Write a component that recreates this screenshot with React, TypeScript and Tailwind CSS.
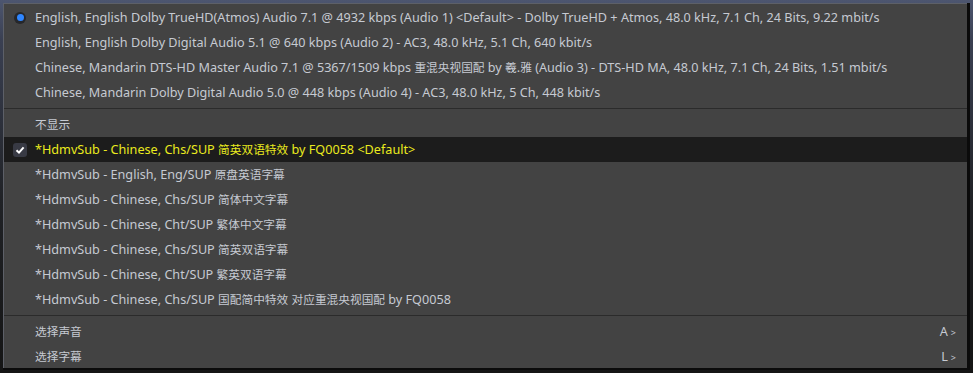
import React from 'react';

type Row = { text: string; mark?: 'radio' | 'check'; active?: boolean; key?: string };

const audio: Row[] = [
  { text: 'English, English Dolby TrueHD(Atmos) Audio 7.1 @ 4932 kbps (Audio 1) <Default> - Dolby TrueHD + Atmos, 48.0 kHz, 7.1 Ch, 24 Bits, 9.22 mbit/s', mark: 'radio' },
  { text: 'English, English Dolby Digital Audio 5.1 @ 640 kbps (Audio 2) - AC3, 48.0 kHz, 5.1 Ch, 640 kbit/s' },
  { text: 'Chinese, Mandarin DTS-HD Master Audio 7.1 @ 5367/1509 kbps 重混央视国配 by 羲.雅 (Audio 3) - DTS-HD MA, 48.0 kHz, 7.1 Ch, 24 Bits, 1.51 mbit/s' },
  { text: 'Chinese, Mandarin Dolby Digital Audio 5.0 @ 448 kbps (Audio 4) - AC3, 48.0 kHz, 5 Ch, 448 kbit/s' },
];

const subs: Row[] = [
  { text: '不显示' },
  { text: '*HdmvSub - Chinese, Chs/SUP 简英双语特效 by FQ0058 <Default>', mark: 'check', active: true },
  { text: '*HdmvSub - English, Eng/SUP 原盘英语字幕' },
  { text: '*HdmvSub - Chinese, Chs/SUP 简体中文字幕' },
  { text: '*HdmvSub - Chinese, Cht/SUP 繁体中文字幕' },
  { text: '*HdmvSub - Chinese, Chs/SUP 简英双语字幕' },
  { text: '*HdmvSub - Chinese, Cht/SUP 繁英双语字幕' },
  { text: '*HdmvSub - Chinese, Chs/SUP 国配简中特效 对应重混央视国配 by FQ0058' },
];

const footer: Row[] = [
  { text: '选择声音', key: 'A' },
  { text: '选择字幕', key: 'L' },
];

// CJK glyphs run a bit narrower than the latin ones in the original menu font
const Label: React.FC<{ text: string }> = ({ text }) => (
  <>
    {text.split(/([\u3400-\u9fff]+)/).map((part, i) =>
      /[\u3400-\u9fff]/.test(part) ? (
        <span key={i} className="text-[11.7px]">
          {part}
        </span>
      ) : (
        part
      )
    )}
  </>
);

const Mark: React.FC<{ kind?: 'radio' | 'check' }> = ({ kind }) => {
  if (kind === 'radio')
    return (
      <div className="w-[12px] h-[12px] rounded-full bg-[#26272b] flex items-center justify-center">
        <div className="w-[7px] h-[7px] rounded-full bg-[#2f86ff]" />
      </div>
    );
  if (kind === 'check')
    return (
      <div className="w-[14px] h-[14px] rounded-[3px] bg-[#383a44] flex items-center justify-center">
        <svg width="10" height="10" viewBox="0 0 10 10">
          <path d="M1.5 5.2 L4 7.6 L8.6 2.4" stroke="#ffffff" strokeWidth="2" fill="none" />
        </svg>
      </div>
    );
  return null;
};

const Item: React.FC<{ row: Row }> = ({ row }) => (
  <div
    className={`h-[25px] flex items-center whitespace-nowrap ${row.active ? 'bg-[#1c1c1c] text-[#eaea1e]' : 'text-[#c6cad2]'}`}
  >
    <div className="w-[31px] flex justify-center pl-[1px]">
      <Mark kind={row.mark} />
    </div>
    <span className="flex-1">
      <Label text={row.text} />
    </span>
    {row.key && (
      <span className="pr-[11px] flex items-baseline gap-[3px]">
        {row.key}
        <span className="text-[9px]">&gt;</span>
      </span>
    )}
  </div>
);

const Sep = () => <div className="my-[3px] h-px bg-[#2b2b2b]" />;

export default function App() {
  return (
    <div className="w-[973px] h-[373px] overflow-hidden bg-[linear-gradient(180deg,#4d5670_0px,#3a4052_40px,#202226_200px,#151515_373px)] pt-[3px] pl-[3px]">
      <div className="w-[967px] h-[367px] bg-[#0b0b0b] pr-[3px] pb-[2px]">
        <div
          className="w-[964px] h-[365px] overflow-hidden bg-[#434343] border-t border-l border-[#5d6068] pt-[1px] text-[12.65px] leading-none"
          style={{ fontFamily: '"Noto Sans", "Noto Sans CJK SC", sans-serif' }}
        >
          {audio.map((r, i) => (
            <Item key={i} row={r} />
          ))}
          <Sep />
          {subs.map((r, i) => (
            <Item key={i} row={r} />
          ))}
          <Sep />
          {footer.map((r, i) => (
            <Item key={i} row={r} />
          ))}
        </div>
      </div>
    </div>
  );
}
